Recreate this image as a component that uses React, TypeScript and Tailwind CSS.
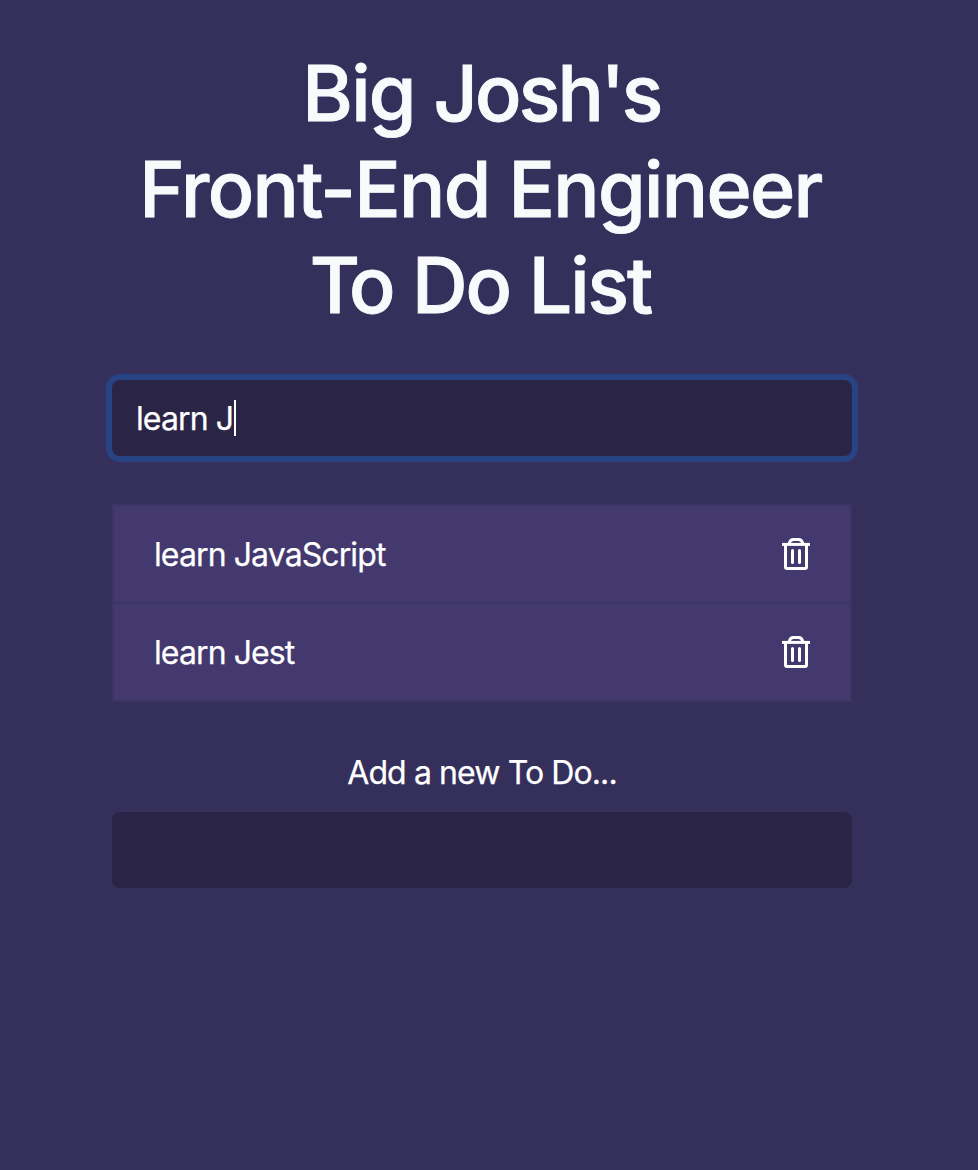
import { useState } from "react";

function Trash() {
  return (
    <svg width="32" height="36" viewBox="0 0 32 36" fill="none" stroke="#fff" strokeWidth="3" strokeLinecap="round">
      <path d="M2 8.4H30" strokeLinecap="butt" />
      <path d="M9.2 7.5C9.8 5 11.4 3.5 13.4 3.5H18.6C20.6 3.5 22.2 5 22.8 7.5" strokeLinecap="butt" />
      <path d="M5.5 9V31Q5.5 32.5 7 32.5H25Q26.5 32.5 26.5 31V9" />
      <path d="M12.5 14.5V26.5M19.5 14.5V26.5" />
    </svg>
  );
}

export default function App() {
  const [todos, setTodos] = useState(["learn JavaScript", "learn Jest"]);
  return (
    <div className="min-h-[1170px] bg-[#352f5b] pl-28 pr-[126px] pt-[45px] font-['Inter',sans-serif] text-[32px] text-white [-webkit-text-stroke:0.25px_white]">
      <h1 className="text-center text-[77px] font-medium leading-[96px] text-[#f9fafc] [-webkit-text-stroke:0.9px_#f9fafc]">
        <span className="block whitespace-nowrap pr-px tracking-[-1.8px]">Big <span className="tracking-[-2.7px]">Josh's</span></span>
        <span className="block whitespace-nowrap pr-[3px] tracking-[-1.65px]">Front-End Engineer</span>
        <span className="block whitespace-nowrap pr-[3px] tracking-[-2px]"><span className="tracking-[-11px]">T</span>o Do List</span>
      </h1>
      <div className="mt-[47px] flex h-[76px] items-center rounded-lg bg-[#2a2547] px-6 ring-6 ring-[#284383]">
        <span className="pt-0.5 tracking-[-0.9px]">learn J</span>
        <span className="ml-px h-9 w-0.5 bg-white" />
      </div>
      <ul className="mt-12 border-2 border-[#3b3464] bg-[#43396e]">
        {todos.map((todo) => (
          <li key={todo} className="flex h-[98px] items-center justify-between border-b-2 border-[#3b3464] pl-10 pr-[38px] last:h-24 last:border-b-0">
            <span className="pt-0.5 tracking-[-0.9px]">{todo}</span>
            <button aria-label="Delete" onClick={() => setTodos(todos.filter((t) => t !== todo))}>
              <Trash />
            </button>
          </li>
        ))}
      </ul>
      <p className="mt-[47px] text-center leading-[48px] tracking-[-0.9px]">Add a new To Do...</p>
      <div className="mt-[15px] h-[76px] rounded-lg bg-[#2a2547]" />
    </div>
  );
}
